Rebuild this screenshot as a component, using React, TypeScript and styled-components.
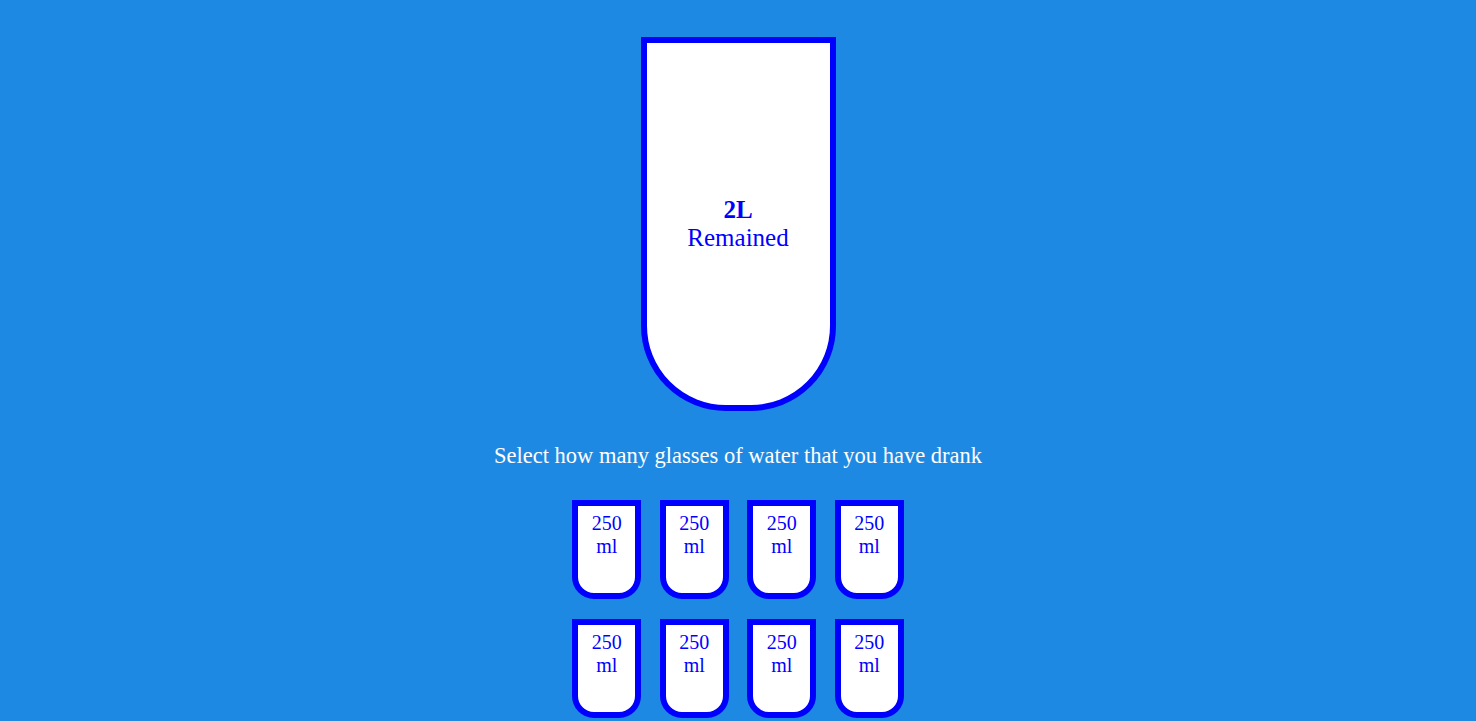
import React from "react";
import styled, { createGlobalStyle } from "styled-components";

const GlobalStyle = createGlobalStyle`
    html, body {
        margin: 0;
        padding: 0;
        background: #1e89e3;
        font-family: "Liberation Serif", "Times New Roman", serif;
    }
`;

const Page = styled.main`
    display: flex;
    flex-direction: column;
    align-items: center;
    padding-top: 37px;
    min-height: 100vh;
    box-sizing: border-box;
    overflow: hidden;
`;

const BigCup = styled.div`
    box-sizing: border-box;
    width: 195px;
    height: 374px;
    background: #fff;
    border: 6px solid #0000ff;
    border-radius: 0 0 85px 85px;
    display: flex;
    flex-direction: column;
    align-items: center;
    justify-content: center;
    color: #0000ff;
    font-size: 25px;
    line-height: 28px;
    text-align: center;
`;

const Amount = styled.span`
    font-weight: bold;
`;

const Prompt = styled.p`
    margin: 32px 0 31px;
    color: #fff;
    font-size: 22.5px;
`;

const CupGrid = styled.div`
    display: grid;
    grid-template-columns: repeat(4, 69px);
    column-gap: 18.5px;
    row-gap: 20px;
`;

const SmallCup = styled.div`
    box-sizing: border-box;
    width: 69px;
    height: 99px;
    background: #fff;
    border: 6px solid #0000ff;
    border-radius: 0 0 22px 22px;
    padding-top: 6px;
    color: #0000ff;
    font-size: 20px;
    text-align: center;
`;

const App = () => {
    const cups = Array.from({ length: 8 });

    return (
        <>
            <GlobalStyle />
            <Page>
                <BigCup>
                    <Amount>2L</Amount>
                    <span>Remained</span>
                </BigCup>
                <Prompt>Select how many glasses of water that you have drank</Prompt>
                <CupGrid>
                    {cups.map((_, i) => (
                        <SmallCup key={i}>
                            250
                            <br />
                            ml
                        </SmallCup>
                    ))}
                </CupGrid>
            </Page>
        </>
    );
};

export default App;
